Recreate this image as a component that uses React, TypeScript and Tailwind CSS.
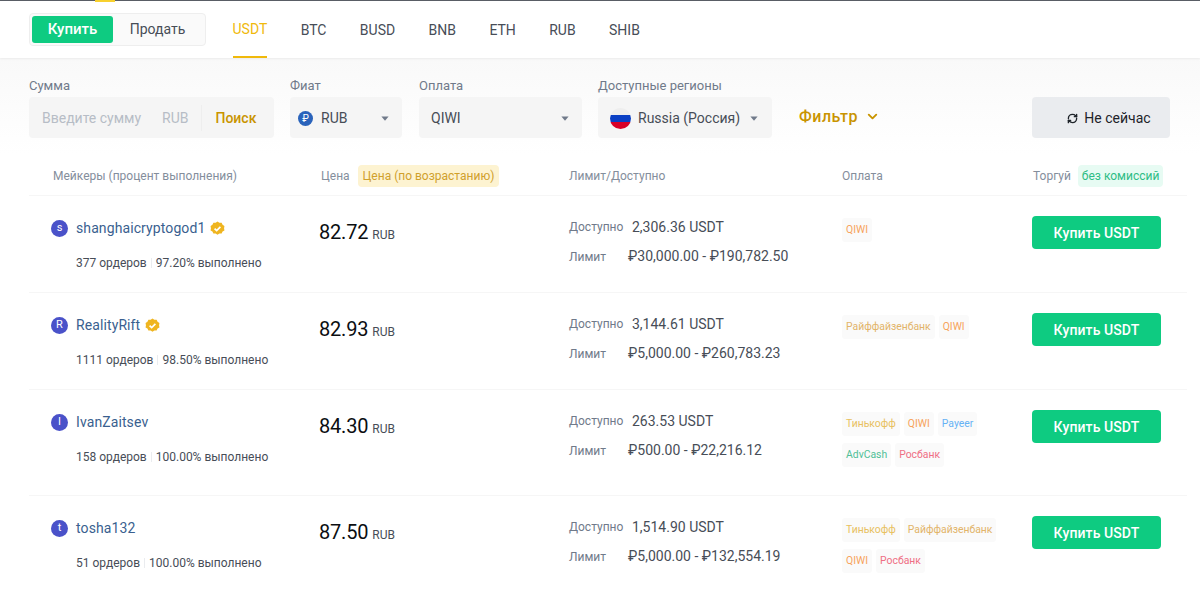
import { FC } from 'react'
import { RefreshCw, ChevronDown } from 'lucide-react'

const tabs = ['USDT', 'BTC', 'BUSD', 'BNB', 'ETH', 'RUB', 'SHIB']

const payColors: { [key: string]: string } = {
  QIWI: 'text-[#f7a35c]',
  'Райффайзенбанк': 'text-[#e2b469]',
  'Тинькофф': 'text-[#e8c15f]',
  Payeer: 'text-[#66b2f5]',
  AdvCash: 'text-[#4fbf97]',
  'Росбанк': 'text-[#ef6f84]',
}

type Offer = {
  letter: string
  name: string
  verified?: boolean
  orders: string
  done: string
  price: string
  avail: string
  limit: string
  pays: string[][]
  height: string
}

const offers: Offer[] = [
  { letter: 's', name: 'shanghaicryptogod1', verified: true, orders: '377 ордеров', done: '97.20% выполнено', price: '82.72', avail: '2,306.36 USDT', limit: '₽30,000.00 - ₽190,782.50', pays: [['QIWI']], height: 'h-[97px]' },
  { letter: 'R', name: 'RealityRift', verified: true, orders: '1111 ордеров', done: '98.50% выполнено', price: '82.93', avail: '3,144.61 USDT', limit: '₽5,000.00 - ₽260,783.23', pays: [['Райффайзенбанк', 'QIWI']], height: 'h-[97px]' },
  { letter: 'I', name: 'IvanZaitsev', orders: '158 ордеров', done: '100.00% выполнено', price: '84.30', avail: '263.53 USDT', limit: '₽500.00 - ₽22,216.12', pays: [['Тинькофф', 'QIWI', 'Payeer'], ['AdvCash', 'Росбанк']], height: 'h-[106px]' },
  { letter: 't', name: 'tosha132', orders: '51 ордеров', done: '100.00% выполнено', price: '87.50', avail: '1,514.90 USDT', limit: '₽5,000.00 - ₽132,554.19', pays: [['Тинькофф', 'Райффайзенбанк'], ['QIWI', 'Росбанк']], height: 'h-[101px]' },
]

const Caret = () => (
  <svg width="8" height="5" viewBox="0 0 10 6" className="shrink-0">
    <path d="M0.5 0.5h9L5 5.8z" fill="#707a8a" />
  </svg>
)

const VerifiedBadge = () => (
  <svg width="15" height="15" viewBox="0 0 16 16" className="shrink-0">
    <path d="M8 .6l2 1.3 2.4-.1 1 2.1 2 1.3-.4 2.4.4 2.4-2 1.200-1 2.200-2.400-.1-2 1.300-2-1.300-2.400.1-1-2.200-2-1.200.4-2.400-.4-2.400 2-1.300 1-2.100 2.400.1z" fill="#efb520" />
    <path d="M4.900 8.100l2.200 2.200 4-4" fill="none" stroke="#fff" strokeWidth="1.800" />
  </svg>
)

const FlagRu = () => (
  <span className="flex flex-col w-[21px] h-[21px] rounded-full overflow-hidden shrink-0">
    <span className="h-[7px] bg-[#eeeeee]" />
    <span className="h-[7px] bg-[#0a3fc4]" />
    <span className="h-[7px] bg-[#d80027]" />
  </span>
)

const Field: FC<{ label: string; className: string; children: React.ReactNode }> = ({ label, className, children }) => (
  <div className={className}>
    <div className="text-[13px] leading-[18px] text-[#707a8a] mb-[2px]">{label}</div>
    <div className="h-[41px] pt-[1px] bg-[#f5f5f5] rounded-[4px] flex items-center text-[14px] text-[#474d57]">{children}</div>
  </div>
)

const OfferRow: FC<{ offer: Offer }> = ({ offer }) => (
  <div className={`flex border-t border-[#f6f6f6] ${offer.height}`}>
    <div className="w-[290px] pl-[22px] pt-[22px]">
      <div className="flex items-center h-[20px]">
        <span className="w-[17px] h-[17px] rounded-full bg-[#4a52c9] text-white text-[11px] flex items-center justify-center mr-[8px]">{offer.letter}</span>
        <span className="text-[14px] text-[#3a5f8f] tracking-[0.1px] mr-[5px]">{offer.name}</span>
        {offer.verified && <VerifiedBadge />}
      </div>
      <div className="flex items-center ml-[25px] mt-[16.5px] text-[12px] leading-[16px] text-[#474d57]">
        <span>{offer.orders}</span>
        <span className="w-px h-[10px] bg-[#eaecef] mx-[4px]" />
        <span>{offer.done}</span>
      </div>
    </div>
    <div className="w-[250px] pt-[23px] flex items-baseline">
      <span className="text-[20px] leading-[26px] tracking-[-0.2px] text-[#0b0e11]">{offer.price}</span>
      <span className="text-[12px] text-[#474d57] ml-[4px]">RUB</span>
    </div>
    <div className="w-[273px] pt-[20px] text-[14px] text-[#474d57]">
      <div className="flex items-center h-[22px]">
        <span className="w-[63px] text-[12px] text-[#707a8a]">Доступно</span>
        <span>{offer.avail}</span>
      </div>
      <div className="flex items-center h-[22px] mt-[7.5px]">
        <span className="w-[59px] text-[12px] text-[#707a8a]">Лимит</span>
        <span>{offer.limit}</span>
      </div>
    </div>
    <div className="w-[190px] pt-[22px] flex flex-col gap-[7px]">
      {offer.pays.map((line, i) => (
        <div key={i} className="flex gap-[4px]">
          {line.map((p) => (
            <span key={p} className={`h-[24px] px-[4px] flex items-center rounded-[3px] bg-[#fafafa] text-[10.4px] ${payColors[p]}`}>{p}</span>
          ))}
        </div>
      ))}
    </div>
    <div className="pt-[20px]">
      <button className="w-[129px] h-[33px] pt-[1px] rounded-[4px] bg-[#0ecb81] text-white text-[14px] font-medium tracking-[0.1px]">Купить USDT</button>
    </div>
  </div>
)

export default function App() {
  return (
    <div className="w-[1200px] h-[596px] overflow-hidden bg-white font-['Roboto',sans-serif]">
      <div className="h-[1px] bg-[#5a5e66] flex pl-[95px]">
        <span className="w-[20px] h-[2px] bg-[#f8d12f]" />
      </div>
      <div className="h-[57px] flex items-center pl-[29px] shadow-[0_1px_2px_rgba(0,0,0,0.06)] relative">
        <div className="flex w-[177px] h-[33px] p-[2px] bg-[#fafafa] border border-[#eeeeee] rounded-[4px] text-[14px]">
          <span className="w-[81px] rounded-[3px] bg-[#0ecb81] text-white text-[15px] font-medium flex items-center justify-center">Купить</span>
          <span className="flex-1 flex items-center justify-center pr-[1px] text-[#474d57]">Продать</span>
        </div>
        <div className="flex h-full ml-[26.500px] gap-[33.400px] text-[14px] text-[#474d57]">
          {tabs.map((t, i) => (
            <span key={t} className={`flex items-center h-full pt-[2px] ${i === 0 ? 'text-[#f0b90b] border-b-2 border-[#f0b90b]' : ''}`}>{t}</span>
          ))}
        </div>
      </div>
      <div className="h-[96px] pl-[29px] pr-[30px] pt-[19px] flex bg-gradient-to-b from-[#f9f9f9] to-white">
        <Field label="Сумма" className="w-[245px]">
          <span className="ml-[13px] text-[#b7bdc6] w-[120px]">Введите сумму</span>
          <span className="text-[#b7bdc6]">RUB</span>
          <span className="w-px h-[26px] bg-[#eeeeee] ml-[13px]" />
          <span className="ml-[13px] text-[#c99400] font-medium">Поиск</span>
        </Field>
        <Field label="Фиат" className="w-[112px] ml-[16px]">
          <span className="ml-[8px] w-[15px] h-[15px] rounded-full bg-[#2a63bb] text-white text-[10px] flex items-center justify-center">₽</span>
          <span className="ml-[8px] flex-1">RUB</span>
          <span className="mr-[13px]"><Caret /></span>
        </Field>
        <Field label="Оплата" className="w-[163px] ml-[17px]">
          <span className="ml-[12px] flex-1">QIWI</span>
          <span className="mr-[13px]"><Caret /></span>
        </Field>
        <Field label="Доступные регионы" className="w-[174px] ml-[16px]">
          <span className="ml-[12px]"><FlagRu /></span>
          <span className="ml-[7px] flex-1 whitespace-nowrap">Russia (Россия)</span>
          <span className="mr-[14px]"><Caret /></span>
        </Field>
        <div className="ml-[27px] mt-[19px] h-[41px] flex items-center text-[#c99400] text-[16px] font-medium tracking-[0.5px]">
          Фильтр
          <ChevronDown size={15} strokeWidth={3} className="ml-[7px]" />
        </div>
        <div className="ml-auto mt-[20px] w-[138px] h-[41px] pl-[16px] pt-[1px] rounded-[4px] bg-[#eaecef] flex items-center justify-center text-[14px] text-[#1e2329]">
          <RefreshCw size={11} strokeWidth={3} className="mr-[6px]" />
          Не сейчас
        </div>
      </div>
      <div className="pl-[29px] pr-[13px]">
        <div className="h-[41px] pt-[2px] flex items-center text-[12px] text-[#848e9c]">
          <span className="w-[292px] pl-[24px]">Мейкеры (процент выполнения)</span>
          <span className="w-[248px] flex items-center">
            Цена
            <span className="ml-[8px] h-[22px] px-[5px] flex items-center rounded-[4px] bg-[#fdf3d1] text-[#d0a02c]">Цена (по возрастанию)</span>
          </span>
          <span className="w-[273px]">Лимит/Доступно</span>
          <span className="w-[191px]">Оплата</span>
          <span className="flex items-center">
            Торгуй
            <span className="ml-[7px] h-[22px] px-[4px] flex items-center rounded-[4px] bg-[#e7fbf3] text-[#2ebd85]">без комиссий</span>
          </span>
        </div>
        {offers.map((o) => (
          <OfferRow key={o.name} offer={o} />
        ))}
      </div>
    </div>
  )
}
